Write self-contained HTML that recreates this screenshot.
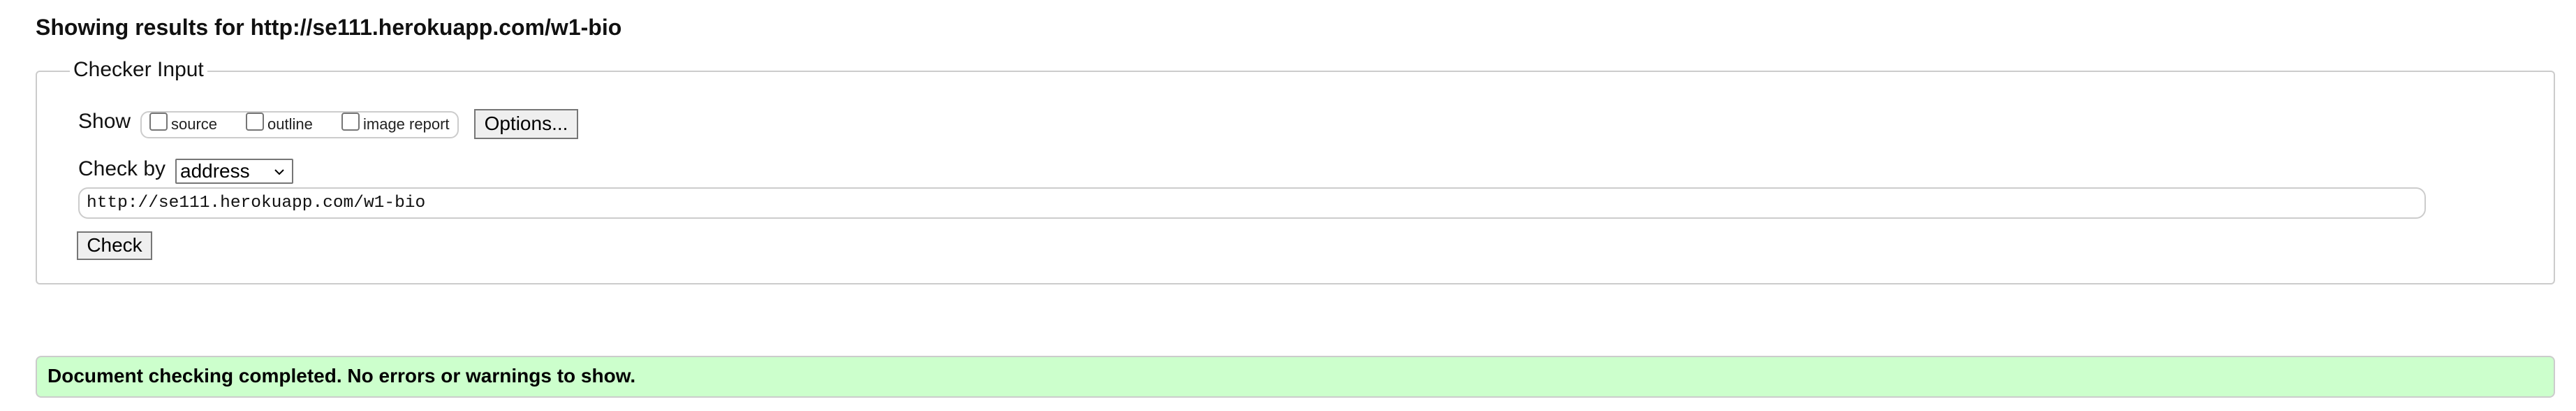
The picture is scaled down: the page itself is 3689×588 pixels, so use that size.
<!DOCTYPE html>
<html><head><meta charset="utf-8"><style>
html,body{margin:0;padding:0;width:3689px;height:588px;background:#fff;overflow:hidden;font-family:"Liberation Sans",Arial,sans-serif;color:#000}
.a{position:absolute;white-space:nowrap}
h1{position:absolute;left:51px;top:21px;margin:0;font-size:32px;font-weight:bold;color:#111;line-height:36px;white-space:nowrap}
.fs{position:absolute;left:51px;top:101px;width:3604px;height:302px;border:2px solid #ccc;border-radius:6px}
.leg{position:absolute;left:100px;top:82px;background:#fff;padding:0 5px;font-size:30px;line-height:36px;color:#111}
.lbl{font-size:30px;line-height:36px;color:#111}
.grp{position:absolute;left:201px;top:159px;width:452px;height:35px;border:2px solid #ccc;border-radius:12px}
.cb{position:absolute;top:161px;width:22px;height:22px;border:2px solid #767676;border-radius:4px;background:#fff}
.cl{position:absolute;top:165px;font-size:22px;line-height:26px;color:#222}
.btn{position:absolute;background:#efefef;border:2px solid #767676;box-sizing:border-box;font-size:28px;text-align:center;color:#000}
.sel{position:absolute;left:251px;top:227px;width:169px;height:36px;box-sizing:border-box;border:2px solid #767676;border-radius:2px;font-size:28px;line-height:32px;padding-left:5px}
.inp{position:absolute;left:112px;top:268px;width:3362px;height:45px;box-sizing:border-box;border:2px solid #ccc;border-radius:14px;font-family:"Liberation Mono",monospace;font-size:24.5px;line-height:41px;padding-left:10px;color:#111}
.ok{position:absolute;left:51px;top:509px;width:3604px;height:56px;background:#ccffcc;border:2px solid #ccc;border-radius:8px}
.okt{position:absolute;left:68px;top:522px;font-size:28px;font-weight:bold;line-height:32px;color:#000}
</style></head><body>
<h1>Showing results for http://se111.herokuapp.com/w1-bio</h1>
<div class="fs"></div>
<div class="a leg">Checker Input</div>
<div class="a lbl" style="left:112px;top:156px">Show</div>
<div class="grp"></div>
<div class="cb" style="left:214px"></div><div class="cl" style="left:245px">source</div>
<div class="cb" style="left:352px"></div><div class="cl" style="left:383px">outline</div>
<div class="cb" style="left:489px"></div><div class="cl" style="left:520px">image report</div>
<div class="btn" style="left:679px;top:156px;width:149px;height:43px;line-height:38px">Options...</div>
<div class="a lbl" style="left:112px;top:224px">Check by</div>
<div class="sel">address<svg style="position:absolute;right:10px;top:12px" width="16" height="10" viewBox="0 0 16 10"><path d="M2 2 L8 8 L14 2" fill="none" stroke="#000" stroke-width="2"/></svg></div>
<div class="inp">http://se111.herokuapp.com/w1-bio</div>
<div class="btn" style="left:110px;top:331px;width:108px;height:41px;line-height:36px">Check</div>
<div class="ok"></div>
<div class="a okt">Document checking completed. No errors or warnings to show.</div>
</body></html>
